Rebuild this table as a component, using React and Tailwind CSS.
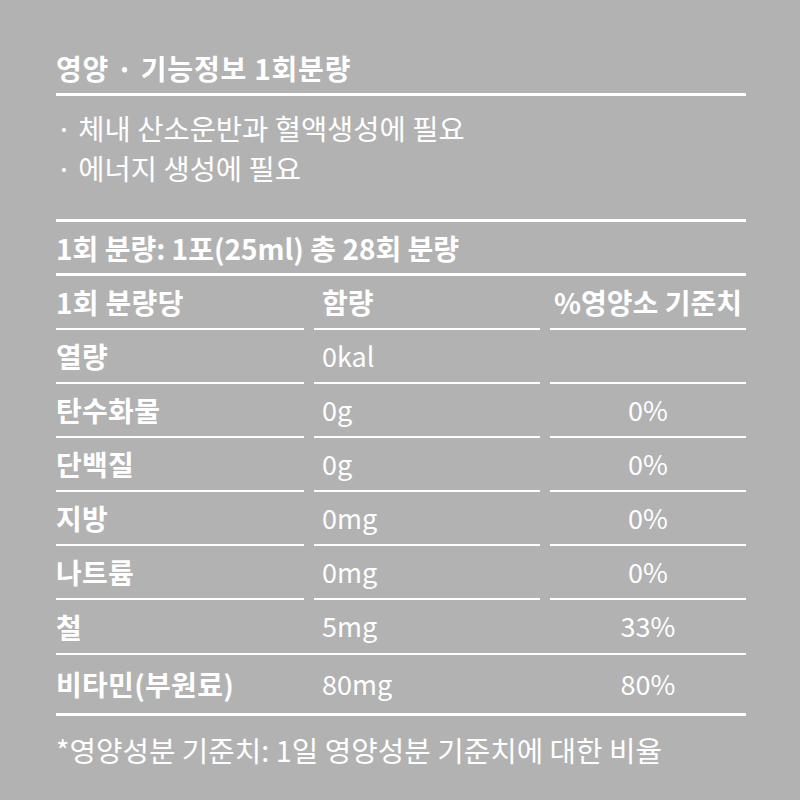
import React from "react";

const rows = [
  { name: "열량", amount: "0kal", pct: "" },
  { name: "탄수화물", amount: "0g", pct: "0%" },
  { name: "단백질", amount: "0g", pct: "0%" },
  { name: "지방", amount: "0mg", pct: "0%" },
  { name: "나트륨", amount: "0mg", pct: "0%" },
  { name: "철", amount: "5mg", pct: "33%", full: true },
  { name: "비타민(부원료)", amount: "80mg", pct: "80%", last: true },
];

const Row = ({ name, amount, pct, head, full, last }) => {
  // segmented rows draw the line per cell, full rows draw it under the whole row
  const cell = full || last ? "" : "border-b-2 border-white";
  const rowCls = last
    ? "h-[58px]"
    : full
    ? "h-[55px] border-b-2 border-white"
    : "h-[54px]";
  return (
    <div className={`grid grid-cols-[248px_226px_196px] gap-x-[10px] ${rowCls}`}>
      <div className={`flex items-center font-bold tracking-[0.3px] ${cell}`}>{name}</div>
      <div className={`flex items-center pl-2 ${head ? "font-bold" : "text-[27px]"} ${cell}`}>
        {amount}
      </div>
      <div className={`flex items-center justify-center ${head ? "font-bold" : "text-[27px]"} ${cell}`}>
        {pct}
      </div>
    </div>
  );
};

const App = () => {
  return (
    <div className="w-[800px] h-[800px] bg-[#b2b2b2] text-white font-['Noto_Sans_CJK_KR',sans-serif] text-[28px] pl-[56px] pr-[54px] pt-[46px]">
      <div className="h-[50px] flex items-center font-bold tracking-[0.8px] border-b-[3px] border-white pb-[3px]">
        영양 · 기능정보 1회분량
      </div>
      <div className="h-[126px] pt-[12px] border-b-[3px] border-white leading-[40px] text-[28.5px]">
        <p>· 체내 산소운반과 혈액생성에 필요</p>
        <p>· 에너지 생성에 필요</p>
      </div>
      <div className="h-[54px] flex items-center font-bold border-b-[3px] border-white">
        1회 분량: 1포(25ml) 총 28회 분량
      </div>
      <Row name="1회 분량당" amount="함량" pct="%영양소 기준치" head />
      {rows.map((r, i) => (
        <Row key={i} {...r} />
      ))}
      <div className="border-t-[3px] border-white pt-[14px] leading-[40px] text-[28.8px]">
        *영양성분 기준치: 1일 영양성분 기준치에 대한 비율
      </div>
    </div>
  );
};

export default App;
